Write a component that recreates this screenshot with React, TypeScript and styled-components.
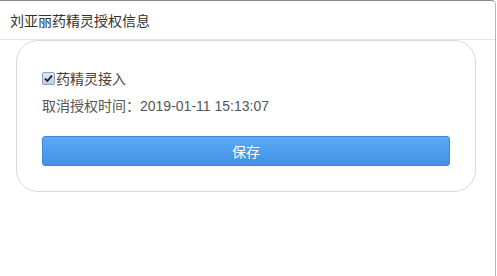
import React, { FC } from "react";
import styled, { createGlobalStyle } from "styled-components";

const GlobalStyle = createGlobalStyle`
  html, body {
    margin: 0;
    padding: 0;
    background: #fff;
  }
  body {
    font-family: "Liberation Sans", "Noto Sans CJK SC", sans-serif;
    font-size: 14px;
    color: #555;
  }
`;

const Window = styled.div`
  width: 496px;
  height: 276px;
  box-sizing: border-box;
  background: #fff;
  border-top: 1px solid #8a8a8a;
  border-right: 1px solid #b5b5b5;
  border-top-right-radius: 5px;
  overflow: hidden;
`;

const Header = styled.div`
  display: flex;
  align-items: center;
  height: 38px;
  padding: 0 10px;
  border-bottom: 1px solid #e6e6e6;
  color: #333;
  font-size: 14px;
`;

const Card = styled.div`
  display: flex;
  flex-direction: column;
  margin: 0 0 0 16px;
  width: 460px;
  height: 152px;
  box-sizing: border-box;
  padding: 25px 25px 0 25px;
  border: 1px solid #d9d9d9;
  border-radius: 22px;
`;

const CheckRow = styled.label`
  display: flex;
  align-items: center;
  height: 24px;
  color: #444;
`;

const CheckBox = styled.span`
  display: inline-flex;
  align-items: center;
  justify-content: center;
  width: 11px;
  height: 11px;
  margin-right: 1px;
  border: 1px solid #8e9fcb;
  border-radius: 2px;
  background: linear-gradient(#dfe6f6, #c3cfec);
`;

const InfoRow = styled.div`
  display: flex;
  align-items: center;
  height: 24px;
  margin-top: 3px;
  color: #555;
`;

const SaveButton = styled.button`
  margin-top: 19px;
  height: 30px;
  width: 408px;
  border: 1px solid #3f86d8;
  border-radius: 3px;
  background: linear-gradient(#5aaaf8, #4390e4);
  color: #fff;
  font-family: inherit;
  font-size: 14px;
  cursor: pointer;
`;

const Check: FC = () => (
  <svg width="9" height="9" viewBox="0 0 9 9">
    <path d="M1 4.6 L3.4 7 L8 1.6" fill="none" stroke="#1d1d1d" strokeWidth="1.8" />
  </svg>
);

const App: FC = () => (
  <>
    <GlobalStyle />
    <Window>
      <Header>刘亚丽药精灵授权信息</Header>
      <Card>
        <CheckRow>
          <CheckBox>
            <Check />
          </CheckBox>
          药精灵接入
        </CheckRow>
        <InfoRow>取消授权时间：2019-01-11 15:13:07</InfoRow>
        <SaveButton>保存</SaveButton>
      </Card>
    </Window>
  </>
);

export default App;
